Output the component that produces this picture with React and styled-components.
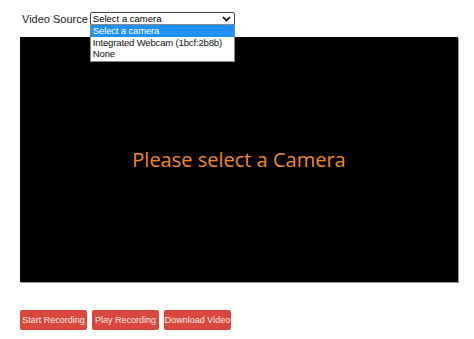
import React, { useState } from "react";
import styled, { createGlobalStyle } from "styled-components";

const GlobalStyle = createGlobalStyle`
  body {
    margin: 0;
    background: #ffffff;
    font-family: "Liberation Sans", Arial, sans-serif;
  }
`;

const options = ["Select a camera", "Integrated Webcam (1bcf:2b8b)", "None"];

const App = () => {
  const [selected, setSelected] = useState(0);

  return (
    <>
      <GlobalStyle />
      <Page>
        <SourceRow>
          <Label>Video Source</Label>
          <SelectWrap>
            <SelectBox>
              <span>{options[selected]}</span>
              <svg width="9" height="6" viewBox="0 0 9 6">
                <path d="M1 1l3.5 3.5L8 1" fill="none" stroke="#000" strokeWidth="1.6" />
              </svg>
            </SelectBox>
            <OptionList>
              {options.map((opt, i) => (
                <Option key={opt} $active={i === selected} onClick={() => setSelected(i)}>
                  {opt}
                </Option>
              ))}
            </OptionList>
          </SelectWrap>
        </SourceRow>
        <Screen>
          <Message>Please select a Camera</Message>
        </Screen>
        <Buttons>
          <Button>Start Recording</Button>
          <Button>Play Recording</Button>
          <Button>Download Video</Button>
        </Buttons>
      </Page>
    </>
  );
};

export default App;

const Page = styled.div`
  padding: 11px 16px 0 20px;
  display: flex;
  flex-direction: column;
`;

const SourceRow = styled.div`
  display: flex;
  align-items: center;
  gap: 2px;
  height: 15px;
  margin-bottom: 11px;
  position: relative;
  z-index: 2;
`;

const Label = styled.div`
  font-size: 11px;
  color: #222;
  padding-left: 2px;
  white-space: nowrap;
`;

const SelectWrap = styled.div`
  position: relative;
`;

const SelectBox = styled.div`
  width: 145px;
  height: 13px;
  box-sizing: border-box;
  border: 1px solid #444;
  border-radius: 2px;
  display: flex;
  align-items: center;
  justify-content: space-between;
  padding: 0 3px 0 2px;
  font-size: 9.5px;
  color: #000;
  background: #fff;
`;

const OptionList = styled.div`
  position: absolute;
  top: 12px;
  left: 0;
  width: 145px;
  box-sizing: border-box;
  border: 1px solid #888;
  background: #fff;
  padding-bottom: 1px;
`;

const Option = styled.div`
  font-size: 9.5px;
  line-height: 11.5px;
  padding: 0 2px 0 2px;
  letter-spacing: -0.15px;
  white-space: nowrap;
  color: ${(p) => (p.$active ? "#fff" : "#111")};
  background: ${(p) => (p.$active ? "#1e90ff" : "transparent")};
  cursor: default;
`;

const Screen = styled.div`
  width: 438px;
  height: 245px;
  background: #000;
  box-shadow: 1px 1px 0 #999;
  display: flex;
  align-items: center;
  justify-content: center;
`;

const Message = styled.div`
  font-family: "Open Sans", "Noto Sans", sans-serif;
  font-size: 20px;
  color: #f28a1c;
`;

const Buttons = styled.div`
  display: flex;
  gap: 5px;
  margin-top: 28px;
`;

const Button = styled.button`
  width: 67px;
  height: 20px;
  padding: 0;
  border: none;
  border-radius: 2px;
  background: #d9483b;
  color: #fbeaea;
  font-family: "Liberation Sans", Arial, sans-serif;
  font-size: 9px;
  white-space: nowrap;
`;
